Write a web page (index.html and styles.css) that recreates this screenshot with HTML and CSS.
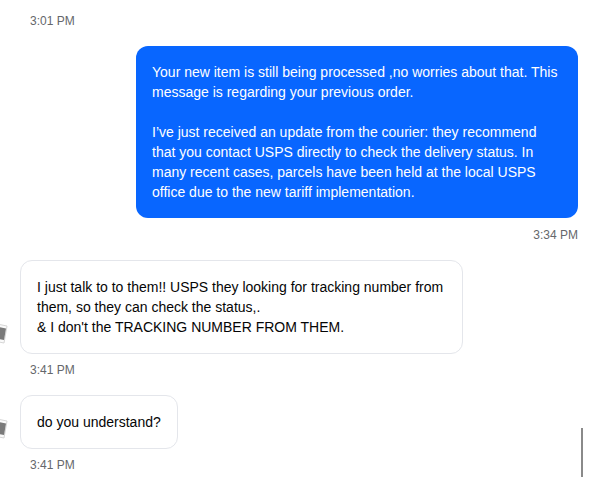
FILE: index.html
```html
<!DOCTYPE html>
<html lang="en">
<head>
<meta charset="utf-8">
<title>Chat</title>
<link rel="stylesheet" href="styles.css">
</head>
<body>
<div class="chat">
  <div class="time time-left">3:01 PM</div>

  <div class="group group-out">
    <div class="bubble bubble-out">
      Your new item is still being processed ,no worries about that. This message is regarding your previous order.<br><br>I’ve just received an update from the courier: they recommend that you contact USPS directly to check the delivery status. In many recent cases, parcels have been held at the local USPS office due to the new tariff implementation.
    </div>
    <div class="time time-right">3:34 PM</div>
  </div>

  <div class="group group-in">
    <div class="row">
      <div class="avatar">
        <svg viewBox="0 0 28 28" width="28" height="28" aria-hidden="true">
          <path d="M7 4 L27 8 L24 25 L4 21 Z" fill="#fafafa" stroke="#d6d6d6" stroke-width="1"/>
          <path d="M19 9 L26 10.5 L24 22 L17 20.5 Z" fill="#7a7a7a"/>
        </svg>
      </div>
      <div class="bubble bubble-in">
        I just talk to to them!! USPS they looking for tracking number from them, so they can check the status,.<br>&amp; I don't the TRACKING NUMBER FROM THEM.
      </div>
    </div>
    <div class="time time-left">3:41 PM</div>
  </div>

  <div class="group group-in">
    <div class="row">
      <div class="avatar">
        <svg viewBox="0 0 28 28" width="28" height="28" aria-hidden="true">
          <path d="M7 4 L27 8 L24 25 L4 21 Z" fill="#fafafa" stroke="#d6d6d6" stroke-width="1"/>
          <path d="M19 9 L26 10.5 L24 22 L17 20.5 Z" fill="#7a7a7a"/>
        </svg>
      </div>
      <div class="bubble bubble-in">do you understand?</div>
    </div>
    <div class="time time-left">3:41 PM</div>
  </div>
</div>
<div class="caret"></div>
</body>
</html>
```
FILE: styles.css
```css
html, body {
  margin: 0;
  padding: 0;
  background: #ffffff;
}

body {
  font-family: "Liberation Sans", Arial, sans-serif;
  color: #050505;
  overflow: hidden;
  height: 480px;
  position: relative;
}

.chat {
  display: flex;
  flex-direction: column;
  padding: 13px 35px 0 20px;
}

.time {
  font-size: 12px;
  line-height: 16px;
  color: #65676b;
}

.time-left {
  padding-left: 10px;
}

.time-right {
  align-self: flex-end;
}

.group {
  display: flex;
  flex-direction: column;
  gap: 9px;
  margin-top: 17px;
}

.group-out {
  align-items: flex-end;
}

.group-in {
  align-items: flex-start;
  gap: 8px;
}

.row {
  display: flex;
  align-items: flex-end;
  gap: 12px;
  margin-left: -40px;
}

.avatar {
  width: 28px;
  height: 28px;
  flex: none;
  margin-bottom: 8px;
}

.avatar svg {
  display: block;
}

.bubble {
  box-sizing: border-box;
  max-width: 443px;
  font-size: 14px;
  line-height: 20px;
  border-radius: 12px;
  padding: 16px;
}

.bubble-out {
  background: #0866ff;
  color: #ffffff;
  max-width: 442px;
}

.bubble-in {
  background: #ffffff;
  border: 1px solid #e4e6eb;
}

.caret {
  position: absolute;
  left: 581px;
  top: 428px;
  width: 2px;
  height: 49px;
  background: #8a8a8a;
}
```
